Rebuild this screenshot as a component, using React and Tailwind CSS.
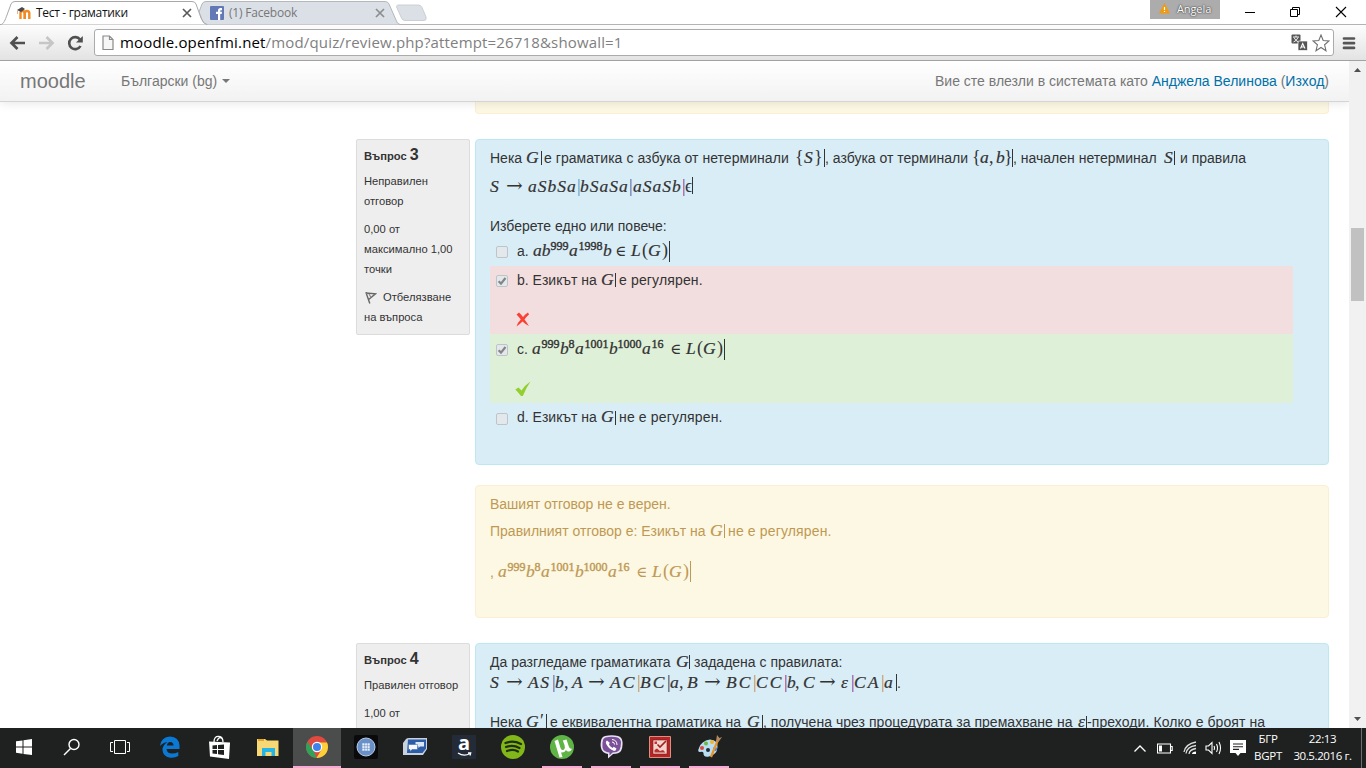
import React from 'react';

const Seg = ({ c = '', children }) => (
  <span className={`shrink-0 whitespace-pre ${c}`}>{children}</span>
);
const M = ({ c = '', children }) => (
  <span className={`shrink-0 whitespace-pre font-['Liberation_Serif',serif] text-[17.5px] italic [-webkit-text-stroke:0.2px_currentColor] ${c}`}>{children}</span>
);
const R = ({ c = '', children }) => (
  <span className={`shrink-0 whitespace-pre font-['Liberation_Serif','DejaVu_Serif',serif] text-[18px] ${c}`}>{children}</span>
);
const Arrow = () => (
  <span className="w-[22px] shrink-0 font-['DejaVu_Serif',serif] text-[20px]">→</span>
);
const Sup = ({ c = '', children }) => (
  <span className={`shrink-0 whitespace-pre ${c}`}>
    <span className="pl-[0.5px] align-[6px] font-['Liberation_Serif',serif] text-[12px] leading-none [-webkit-text-stroke:0.4px_currentColor]">{children}</span>
  </span>
);
const Bar = ({ c = '' }) => <span className={`w-px shrink-0 self-center bg-current ${c}`} />;
const Line = ({ c = '', children }) => <div className={`flex items-baseline whitespace-pre ${c}`}>{children}</div>;

const Member = () => (
  <>
    <span className="w-[16px] shrink-0 font-['DejaVu_Serif',serif] text-[15px]">∈</span>
    <M c="w-[11px]">L</M>
    <R c="w-[6px]">(</R>
    <M c="w-[14px]">G</M>
    <R c="w-[7px]">)</R>
    <Bar c="h-[21px]" />
  </>
);
const LongWord = () => (
  <>
    <M c="w-[9px]">a</M>
    <Sup c="w-[19px]">999</Sup>
    <M c="w-[8px]">b</M>
    <Sup c="w-[7px]">8</Sup>
    <M c="w-[9px]">a</M>
    <Sup c="w-[25px]">1001</Sup>
    <M c="w-[8px]">b</M>
    <Sup c="w-[25px]">1000</Sup>
    <M c="w-[9px]">a</M>
    <Sup c="w-[19px]">16</Sup>
    <Member />
  </>
);

const Check = ({ on, c = '' }) => (
  <span className={`flex size-[12px] shrink-0 items-center justify-center self-center rounded-[2px] border border-[#bfc4c8] bg-[#e3e8ec] ${c}`}>
    {on && (
      <svg width="10" height="10" viewBox="0 0 10 10"><path d="M1.6 5.2 4 7.6 8.5 2" fill="none" stroke="#858585" strokeWidth="2.2" /></svg>
    )}
  </span>
);

const Flag = () => (
  <svg width="13" height="13" viewBox="0 0 13 13" className="shrink-0">
    <path d="M2 1.500 5.800 12.500M1.500 2 11.500 2.800 5 8.200" fill="none" stroke="#666" strokeWidth="1.400" />
    <path d="M5 3 7 6.500" stroke="#888" strokeWidth="1.200" />
  </svg>
);

function Tab({ active, title, icon }) {
  return (
    <div className={`relative flex h-[25px] shrink-0 items-center ${active ? 'z-10 w-[202px] pl-[16px]' : 'w-[194px] pl-[8px]'}`}>
      <svg className={`absolute top-0 ${active ? 'left-0' : 'left-[-3px]'}`} width="208" height="25" viewBox="0 0 208 25">
        {active ? (
          <path d="M0 25C4 24 5 20 7 15L11 4Q12 1.500 15 1.500H192Q195 1.500 196 4L201 18Q203 24 207 24.500V25Z" fill="#fff" stroke="#a9a9a9" strokeWidth="1" />
        ) : (
          <path d="M6 24.500Q3 21 0 12L3 4Q4 1.500 7 1.500H186Q189 1.500 190 4L197 20Q198 24 201 24.500" fill="#dbe0e7" stroke="#b4b7bb" />
        )}
      </svg>
      <div className="relative flex items-center">
        {icon}
        <span className={`w-[151px] pl-[5px] font-['Open_Sans',sans-serif] text-[12px] leading-none ${active ? 'tracking-[-0.3px] text-[#111]' : 'tracking-[-0.2px] text-[#777]'}`}>{title}</span>
        <svg width="10" height="10" viewBox="0 0 10 10"><path d="M1 1 9 9M9 1 1 9" stroke={active ? '#5a5a5a' : '#8b8d90'} strokeWidth="1.700" /></svg>
      </div>
    </div>
  );
}

const MoodleIcon = () => (
  <svg width="15" height="14" viewBox="0 0 15 14">
    <path d="M4.500 13V7Q4.500 5 6.500 5T8.500 7V13M8.800 13V7Q9 5 11 5T13.300 7V13" fill="none" stroke="#f18a22" strokeWidth="2.400" />
    <path d="M1 4 6 1 9 3 5 6Z" fill="#4a4a4a" /><path d="M1.500 4.500V8" stroke="#d8a27a" strokeWidth=".8" />
  </svg>
);
const FbIcon = () => (
  <svg width="14" height="14" viewBox="0 0 14 14"><rect width="14" height="14" rx="1" fill="#6379b5" /><path d="M8 14V8H6V5.800H8V4.500Q8 2 10.500 2H12V4.200H10.800Q10.200 4.200 10.200 5V5.800H12L11.700 8H10.200V14Z" fill="#fff" /></svg>
);

function Browser() {
  return (
    <header className="shrink-0">
      <div className="flex h-[25px] bg-white shadow-[inset_0_-1px_0_#b3b3b3]">
        <Tab active title="Тест - граматики" icon={<MoodleIcon />} />
        <Tab title="(1) Facebook" icon={<FbIcon />} />
        <svg className="mt-[4px]" width="32" height="18" viewBox="0 0 32 18"><path d="M3 1H22Q25 1 26 3.500L30 13Q31 16.500 28 16.500H9Q6.500 16.500 5.500 14L1 4Q-.5 1 3 1Z" fill="#dbe0e7" stroke="#cbced2" /></svg>
        <div className="ml-auto flex h-[24px] items-center">
          <div className="flex h-[19px] w-[70px] items-center self-start bg-[#acacac] pb-[3px] pl-[9px]">
            <svg width="11" height="11" viewBox="0 0 11 11"><path d="M5.500 0 11 10.500H0Z" fill="#f09a10" /><path d="M5.500 4V7M5.500 8v1" stroke="#fff" strokeWidth="1.200" /></svg>
            <span className="pl-[7px] font-['Open_Sans',sans-serif] text-[11px] leading-none tracking-[-0.1px] text-white [text-shadow:0_0_2px_#333,0_0_1px_#444]">Angela</span>
          </div>
          <svg className="ml-[24px]" width="12" height="12" viewBox="0 0 12 12"><path d="M1 6.500H11" stroke="#000" /></svg>
          <svg className="ml-[33px]" width="12" height="12" viewBox="0 0 12 12"><path d="M1.500 3.500H8.500V10.500H1.500ZM3.500 3V1.500H10.500V8.500H9" fill="none" stroke="#000" /></svg>
          <svg className="mr-[19px] ml-[34px]" width="12" height="12" viewBox="0 0 12 12"><path d="M1 1 11 11M11 1 1 11" stroke="#000" strokeWidth="1.100" /></svg>
        </div>
      </div>
      <div className="flex h-[36px] items-center border-b border-[#a2a2a2] bg-linear-to-b from-[#fdfdfd] to-[#e3e3e3]">
        <svg className="ml-[9px]" width="17" height="16" viewBox="0 0 17 16"><path d="M16 8H3M8.500 2 2.500 8 8.500 14" fill="none" stroke="#505050" strokeWidth="2.700" /></svg>
        <svg className="ml-[12px]" width="17" height="16" viewBox="0 0 17 16"><path d="M1 8H14M8.500 2 14.500 8 8.500 14" fill="none" stroke="#c6c6c6" strokeWidth="2.700" /></svg>
        <svg className="ml-[12px]" width="17" height="16" viewBox="0 0 17 16"><path d="M13 4.500A6 6 0 1 0 13.500 11" fill="none" stroke="#505050" strokeWidth="2.600" /><path d="M15.800 1V7.500H9Z" fill="#505050" /></svg>
        <div className="ml-[10px] flex h-[27px] w-[1240px] items-center rounded-[3px] border border-[#ababab] bg-white">
          <svg className="ml-[7px]" width="12" height="16" viewBox="0 0 12 16"><path d="M1 1H7.500L11 4.500V14.500H1ZM7.500 1V4.500H11" fill="#f7f7f7" stroke="#8a8a8a" strokeWidth="1.200" /></svg>
          <span className="ml-[6px] font-['Open_Sans',sans-serif] text-[15px] leading-none tracking-[0.16px] text-[#808080]"><span className="text-black">moodle.openfmi.net</span>/mod/quiz/review.php?attempt=26718&amp;showall=1</span>
          <svg className="ml-auto" width="17" height="17" viewBox="0 0 17 17">
            <rect x=".5" y=".5" width="9" height="9" rx="1" fill="#555" /><rect x="7" y="7" width="9.500" height="9.500" rx="1" fill="#555" stroke="#fff" strokeWidth=".7" />
            <path d="M2 3H8M5 1.500V3M3 3.500Q4.500 7 7.500 8M7 3.500Q5.500 7 2.500 8" fill="none" stroke="#fff" strokeWidth=".9" /><path d="M9.500 14.500 11.700 9.500 14 14.500M10.300 13H13.200" fill="none" stroke="#fff" strokeWidth="1.100" />
          </svg>
          <svg className="mr-[3px] ml-[4px]" width="18" height="18" viewBox="0 0 18 18"><path d="M9 1 11.200 6.500 17 7 12.600 10.800 14 16.700 9 13.500 4 16.700 5.400 10.800 1 7 6.800 6.500Z" fill="#fff" stroke="#707070" strokeWidth="1.100" /></svg>
        </div>
        <svg className="ml-[8px]" width="14" height="14" viewBox="0 0 14 14"><path d="M2 2.500H12M2 7.200H12M2 11.900H12" stroke="#565656" strokeWidth="2.700" strokeLinecap="round" /></svg>
      </div>
    </header>
  );
}

function Question3() {
  return (
    <div className="w-[854px] shrink-0">
      <section className="h-[326px] rounded-[4px] border border-[#bce8f1] bg-[#d9edf7] pt-[5px] pl-[14px]">
        <Line c="h-[26px] leading-[24px]">
          <Seg c="w-[36px]">Нека</Seg><M c="w-[15px]">G</M><Bar c="h-[14px]" />
          <Seg c="w-[253px] pl-[2px] tracking-[0.05px]">е граматика с азбука от нетерминали</Seg>
          <R c="w-[9px]">{'{'}</R><M c="w-[10px]">S</M><R c="w-[10px]">{'}'}</R><Bar c="h-[18px]" />
          <Seg c="w-[147px]">, азбука от терминали</Seg>
          <R c="w-[8px]">{'{'}</R><M c="w-[9px]">a</M><R c="w-[7px]">,</R><M c="w-[8px]">b</M><R c="w-[8px]">{'}'}</R><Bar c="h-[18px]" />
          <Seg c="w-[151px]">, начален нетерминал</Seg>
          <M c="w-[10px]">S</M><Bar c="h-[14px]" />
          <Seg c="pl-[5px]">и правила</Seg>
        </Line>
        <Line c="h-[28px] leading-[28px]">
          <M c="w-[16px]">S</M><Arrow />
          <M c="w-[49px] tracking-[1px]">aSbSa</M><R c="w-[3px] text-[#4593c4]">|</R>
          <M c="w-[49px] tracking-[1px]">bSaSa</M><R c="w-[4px] text-[#4d56a0]">|</R>
          <M c="w-[49px] tracking-[1px]">aSaSb</M><R c="w-[3px] text-[#8a2f8f]">|</R>
          <R c="w-[7px] text-[16px]">ϵ</R><Bar c="h-[17px]" />
        </Line>
        <p className="mt-[17px] h-[20px] leading-[20px]">Изберете едно или повече:</p>
        <Line c="h-[30px] leading-[29px]">
          <Check c="mt-[2px] mr-[9px] ml-[6px]" /><Seg c="w-[16px]">a.</Seg>
          <M c="w-[17px]">ab</M><Sup c="w-[19px]">999</Sup><M c="w-[9px]">a</M><Sup c="w-[25px]">1998</Sup><M c="w-[12px]">b</M><Member />
        </Line>
        <div className="h-[68px] w-[803px] bg-[#f2dede]">
          <Line c="h-[28px] leading-[27px]">
            <Check on c="mt-[2px] mr-[9px] ml-[6px]" /><Seg c="w-[84px]">b. Езикът на</Seg><M c="w-[14px]">G</M><Bar c="h-[14px]" /><Seg c="pl-[3px] tracking-[0.15px]">е регулярен.</Seg>
          </Line>
          <svg className="mt-[18px] ml-[26px]" width="14" height="15" viewBox="0 0 14 15"><path d="M.5 2.500 3 .5Q5 2 7 5 9 2 12 .500L13 2.500Q10 5 8.500 7.500 10.500 10 13 14 9 12 6.500 9.500 4 12 .5 14.500 2 10 4.800 7.500 3 5 .5 2.500Z" fill="#fb4036" /></svg>
        </div>
        <div className="h-[69px] w-[803px] bg-[#dff0d8]">
          <Line c="h-[30px] leading-[29px]">
            <Check on c="mt-[2px] mr-[9px] ml-[6px]" /><Seg c="w-[15px]">c.</Seg><LongWord />
          </Line>
          <svg className="mt-[17px] ml-[25px]" width="16" height="16" viewBox="0 0 16 16"><path d="M.3 8.500 3.500 6.500 6.500 9.500Q10 4 15.500 .5 11 7 7.800 15H6Q3 11 .3 8.500Z" fill="#92cf2f" /></svg>
        </div>
        <Line c="h-[30px] leading-[27px]">
          <Check c="mt-[2px] mr-[9px] ml-[6px]" /><Seg c="w-[84px]">d. Езикът на</Seg><M c="w-[14px]">G</M><Bar c="h-[14px]" /><Seg c="pl-[3px] tracking-[0.15px]">не е регулярен.</Seg>
        </Line>
      </section>
      <section className="mt-[20px] h-[133px] rounded-[4px] border border-[#fbeed5] bg-[#fcf8e3] pt-[8px] pl-[14px] text-[#c09853]">
        <p className="leading-[20px]">Вашият отговор не е верен.</p>
        <Line c="mt-[3px] h-[28px] leading-[27px]">
          <Seg c="w-[220px]">Правилният отговор е: Езикът на</Seg><M c="w-[14px]">G</M><Bar c="h-[14px]" /><Seg c="pl-[3px] tracking-[0.15px]">не е регулярен.</Seg>
        </Line>
        <Line c="mt-[11px] h-[30px] leading-[30px]"><Seg c="w-[8px]">,</Seg><LongWord /></Line>
      </section>
    </div>
  );
}

const P = ({ c = '' }) => <R c={`w-[3px] ${c}`}>|</R>;

function Question4() {
  return (
    <section className="h-[200px] w-[854px] shrink-0 rounded-[4px] border border-[#bce8f1] bg-[#d9edf7] pt-[8px] pl-[14px]">
      <Line c="h-[20px] leading-[19px]">
        <Seg c="w-[186px]">Да разгледаме граматиката</Seg><M c="w-[13px]">G</M><Bar c="h-[14px]" /><Seg c="pl-[4px]">зададена с правилата:</Seg>
      </Line>
      <Line c="h-[20px] leading-[19px]">
        <M c="w-[16px]">S</M><Arrow /><M c="w-[24px] tracking-[1.500px]">AS</M><P c="text-[#4d56a0]" /><M c="w-[9px]">b</M><R c="w-[8px]">,</R>
        <M c="w-[16px]">A</M><Arrow /><M c="w-[27px] tracking-[2px]">AC</M><P c="text-[#c58a3c]" /><M c="w-[27px] tracking-[2px]">BC</M><P /><M c="w-[9px]">a</M><R c="w-[8px]">,</R>
        <M c="w-[17px]">B</M><Arrow /><M c="w-[27px] tracking-[2px]">BC</M><P c="text-[#c58a3c]" /><M c="w-[28px] tracking-[2px]">CC</M><P c="text-[#8a2f8f]" /><M c="w-[8px]">b</M><R c="w-[8px]">,</R>
        <M c="w-[16px]">C</M><Arrow /><M c="w-[10px]">ε</M><P c="text-[#8a2f8f]" /><M c="w-[27px] tracking-[2px]">CA</M><P c="text-[#c58a3c]" /><M c="w-[12px]">a</M><Bar c="h-[17px]" /><Seg>.</Seg>
      </Line>
      <Line c="mt-[20px] h-[20px] leading-[19px]">
        <Seg c="w-[36px]">Нека</Seg><M c="w-[14px]">G</M><R c="w-[6px]">′</R><Bar c="h-[17px]" /><Seg c="w-[200px] pl-[3px]">е еквивалентна граматика на</Seg><M c="w-[15px]">G</M><Bar c="h-[14px]" />
        <Seg c="w-[315px] tracking-[0.04px]">, получена чрез процедурата за премахване на</Seg><M c="w-[8px]">ε</M><Bar c="h-[12px]" /><Seg c="tracking-[0.08px]">-преходи. Колко е броят на</Seg>
      </Line>
    </section>
  );
}

const Info = ({ n, c = '', children }) => (
  <aside className={`mr-[5px] w-[114px] shrink-0 rounded-[2px] border border-[#dcdcdc] bg-[#eee] pt-[6px] pl-[7px] text-[11.200px] leading-[20px] ${c}`}>
    <h3 className="h-[20px] font-bold whitespace-pre">Въпрос <span className="text-[16px] leading-none">{n}</span></h3>
    {children}
  </aside>
);

const Slot = ({ run, active, narrow, children }) => (
  <div className={`flex h-[40px] shrink-0 flex-col items-center ${active ? 'ml-px w-[48px] bg-[#4b4c4c]' : narrow ? 'w-[48px]' : 'w-[49px] pl-px'}`}>
    <div className="flex h-[38px] items-center">{children}</div>
    {(run || active) && <div className={`h-[2px] bg-[#f7a8d3] ${active ? 'w-[48px]' : 'w-[40px]'}`} />}
  </div>
);

function Taskbar() {
  return (
    <footer className="flex h-[40px] shrink-0 bg-[#1e2120] text-white">
      <Slot narrow><svg width="16" height="16" viewBox="0 0 16 16" fill="#fff"><path d="M0 2.300 6.500 1.400V7.600H0ZM7.500 1.200 16 0V7.600H7.500ZM0 8.500H6.500V14.700L0 13.800ZM7.500 8.500H16V16L7.500 14.900Z" /></svg></Slot>
      <Slot narrow><svg width="18" height="18" viewBox="0 0 18 18"><circle cx="11" cy="6.500" r="5" fill="none" stroke="#fff" strokeWidth="1.400" /><path d="M7.500 10.500 1 17" stroke="#fff" strokeWidth="1.500" /></svg></Slot>
      <Slot narrow><svg width="20" height="14" viewBox="0 0 20 14"><path d="M4.500 .5H15.500V13.500H4.500ZM3 2.500H.5V11.500H3M17 2.500H19.500V11.500H17" fill="none" stroke="#fff" /></svg></Slot>
      <div className="w-px" />
      <Slot><svg width="22" height="22" viewBox="0 0 22 22"><path d="M1 10Q2 1 11 .5 20 1 20.500 9.500V13H7.500Q8 17.500 13 17.500 16.500 17.500 19.300 16V20Q16 22 11.500 21.700 4 21 3.500 14 3.500 9 8.500 6 4 6.500 1 10ZM7.800 9.500H14.500Q14.500 6 11.200 6 8.500 6 7.800 9.500Z" fill="#0b78d4" /></svg></Slot>
      <Slot><svg width="21" height="24" viewBox="0 0 21 24"><path d="M5 7Q5 1 10 1.500 14 2 14 7M8 6Q10 1 13 3.500" fill="none" stroke="#fff" strokeWidth="1.300" /><path d="M0 6.500 21 7.500 20 24 1 21.500Z" fill="#fff" /><path d="M3.500 10.500 8 10V14H3.500ZM9 10 15 9.500V14H9ZM3.500 15H8V19L3.500 18.500ZM9 15H15V20L9 19.200Z" fill="#1e2120" /></svg></Slot>
      <Slot><svg width="22" height="19" viewBox="0 0 22 19"><path d="M0 1H8L10 2.500H21.500V18H0Z" fill="#f8d775" /><path d="M1 1H7V3H1Z" fill="#e8a320" /><path d="M5 18V10H18V18H14.500V14H8.500V18Z" fill="#23b4e8" /></svg></Slot>
      <Slot active><svg width="22" height="22" viewBox="0 0 22 22"><circle cx="11" cy="11" r="11" fill="#e04a3f" /><path d="M1.500 5.500 8 16 11 22A11 11 0 0 1 1.500 5.500Z" fill="#2ea35a" /><path d="M21 6.500H11L15.500 13.500 10.500 22A11 11 0 0 0 21 6.500Z" fill="#fdd037" /><circle cx="11" cy="11" r="5.200" fill="#fff" /><circle cx="11" cy="11" r="4" fill="#3f82ee" /></svg></Slot>
      <Slot><svg width="24" height="24" viewBox="0 0 24 24"><rect width="24" height="24" rx="2" fill="#0a0a0c" /><circle cx="12" cy="12" r="9" fill="#6a90c8" stroke="#b9cde8" /><path d="M8 8H16V16H8ZM10.700 8V16M13.400 8V16M8 10.700H16M8 13.400H16" fill="#e9f1fb" stroke="#6a90c8" strokeWidth=".6" /></svg></Slot>
      <Slot><svg width="24" height="18" viewBox="0 0 24 18"><path d="M3 1Q4 0 6 0H24V11L20 17H0V5Z" fill="#c8d2dd" /><path d="M5 1.500H23V10.500L19.500 15H4Z" fill="#2d5ca8" /><path d="M12.500 4H21V8.500H17L15.500 10V8.500H12.500Z" fill="#dbe6f4" /><path d="M5.500 6.500H14.500V11.500H9L7 13.500V11.500H5.500Z" fill="#f6f9fd" stroke="#2d5ca8" strokeWidth=".5" /></svg></Slot>
      <Slot><span className="flex size-[24px] flex-col items-center rounded-[1px] bg-[#242b38]"><span className="h-[17px] font-['Open_Sans',sans-serif] text-[20px] leading-[15px] font-bold">a</span><svg width="15" height="5" viewBox="0 0 15 5"><path d="M1 1Q7 5 13 1.500M11 .8H13.700L13 3.500" fill="none" stroke="#fff" strokeWidth="1.300" /></svg></span></Slot>
      <Slot><svg width="24" height="24" viewBox="0 0 24 24"><circle cx="12" cy="12" r="12" fill="#82b71a" /><path d="M4.500 8Q12 5 20 9M5 12Q12 9.500 18.500 13M6 16Q12 13.500 17 16.500" fill="none" stroke="#20300a" strokeWidth="2.200" strokeLinecap="round" /></svg></Slot>
      <Slot run><svg width="24" height="24" viewBox="0 0 24 24"><circle cx="12" cy="12" r="12" fill="#5fb445" /><path d="M4.500 6 8 4.500 10.500 13Q11.500 16 14 14.500 15.500 13 14.500 10L12.800 5.500 16.500 4.500 19 12Q20 14.500 22 13.500 21 17 18 16.500 16.500 16 16 15 14.500 18 11 17.500L12.500 22 9.500 22.500Z" fill="#fff" /></svg></Slot>
      <Slot run><svg width="23" height="24" viewBox="0 0 23 24"><path d="M5 1Q12-.5 18 1 22 2 22.500 7 23 12 21 16 19 19 13 19L8 23.500V19Q2 18 1 13 0 8 1.500 4 2.500 1.500 5 1Z" fill="#e8e2f2" /><path d="M5.500 2.500Q12 1 17.500 2.500 20.500 3.500 21 7 21 12 19.500 15 17.500 17.500 12.500 17.500L9.500 20.500V17.500Q3.500 17 2.500 12.500 2 8 3 5 3.500 3 5.500 2.500Z" fill="#7b5199" /><path d="M7 5.500Q5 6.500 6.500 9.500 9 14 14 16 16 16 16.500 13.500L13.800 11.800 12.500 13Q9.500 11.500 8.800 9L10 8Z" fill="#fff" /><path d="M12 4.500Q17 5 17 10M12 7Q14.500 7 14.500 9.500" fill="none" stroke="#fff" /></svg></Slot>
      <Slot run><svg width="22" height="22" viewBox="0 0 22 22"><path d="M.5 .5H21.500V21.500H.5Z" fill="#b32626" stroke="#e08c80" /><path d="M4 4H18V18H4Z" fill="#f2d5cf" stroke="#8c1c1c" strokeWidth=".6" /><path d="M5.500 5.500H8V8H5.500Z" fill="#c53030" /><path d="M8.500 8.500 11 11 17 5" fill="none" stroke="#a32020" strokeWidth="1.600" /><path d="M5.500 16.500V14L8 12.500 11 15 14 14 16.500 16.500Z" fill="#b83030" /></svg></Slot>
      <Slot run><svg width="25" height="24" viewBox="0 0 25 24"><path d="M2 13Q4 6 13 4.500 21 5 20.500 12 20 20 12 21.500 6 22.500 6.500 18 6 16 3 17 0 17 2 13Z" fill="#b9def2" /><circle cx="5" cy="13" r="2" fill="#d94a3e" /><circle cx="9" cy="8.500" r="2" fill="#6cba3c" /><circle cx="15" cy="7" r="2" fill="#efb531" /><circle cx="11" cy="15" r="2" fill="#1e2a38" /><circle cx="18" cy="14" r="2" fill="#3a7fd0" /><path d="M20.500 6 14 22" stroke="#e8922c" strokeWidth="2.200" /><path d="M19 6 20 0 22.500 3 25 2 21.500 7Z" fill="#b58a5e" /></svg></Slot>

      <div className="ml-auto flex items-center">
        <svg width="14" height="9" viewBox="0 0 14 9"><path d="M1.500 7.500 7 2 12.500 7.500" fill="none" stroke="#fff" strokeWidth="1.300" /></svg>
        <svg className="ml-[10px]" width="16" height="11" viewBox="0 0 16 11"><path d="M.5 1H13.500V10H.5ZM14 3.500H15.200V7.500H14" fill="none" stroke="#fff" strokeWidth="1.100" /><path d="M2 2.500H5V8.500H2Z" fill="#fff" /></svg>
        <svg className="ml-[10px]" width="14" height="14" viewBox="0 0 14 14"><path d="M1 11Q2.500 3 13 1M3 12.500Q4 5.500 13 4.500M6 13Q6.500 8.500 13 7.500" fill="none" stroke="#ddd" strokeWidth="1.300" /><path d="M9 13Q9 10.500 13 10.500V13Z" fill="#fff" /></svg>
        <svg className="ml-[8px]" width="17" height="14" viewBox="0 0 17 14"><path d="M1 5H3.500L7 1.500V12.500L3.500 9H1ZM9 5Q10 7 9 9M11.500 3Q13.500 7 11.500 11M14 1Q17 7 14 13" fill="none" stroke="#fff" strokeWidth="1.100" /></svg>
        <svg className="ml-[8px]" width="16" height="16" viewBox="0 0 16 16"><path d="M0 0H16V13H10.500L8 16 5.500 13H0Z" fill="#fff" /><path d="M3 4H13M3 6.700H13M3 9.400H9" stroke="#1e2120" strokeWidth="1.100" /></svg>
        <div className="ml-[7px] w-[30px] pb-[2px] text-center font-['Open_Sans',sans-serif] text-[11.500px] leading-[17px] tracking-[-0.3px]"><p>БГР</p><p>BGPT</p></div>
        <div className="ml-[9px] w-[61px] pb-[3px] text-center font-['Open_Sans',sans-serif] text-[11.500px] leading-[17px] tracking-[-0.4px] whitespace-nowrap"><p>22:13</p><p>30.5.2016 г.</p></div>
        <div className="mr-[4px] ml-[8px] h-[40px] w-px bg-[#6d6f6e]" />
      </div>
    </footer>
  );
}

export default function App() {
  return (
    <div className="flex h-[768px] w-[1366px] flex-col overflow-hidden bg-white font-['Liberation_Sans',sans-serif] text-[14px] text-[#333]">
      <Browser />
      <div className="flex h-[667px] shrink-0">
        <main className="h-[667px] w-[1349px] overflow-hidden">
          <nav className="relative flex h-[41px] items-center border-b border-[#d4d4d4] bg-linear-to-b from-white to-[#f2f2f2] text-[#777] shadow-[0_1px_10px_rgba(0,0,0,0.1)]">
            <span className="w-[101px] pl-[20px] text-[20px] leading-none">moodle</span>
            <span className="pl-[20px]">Български (bg)</span>
            <svg className="ml-[5px]" width="8" height="4" viewBox="0 0 8 4"><path d="M0 0H8L4 4Z" fill="#777" /></svg>
            <span className="mr-[20px] ml-auto">Вие сте влезли в системата като <a className="text-[#0070a8]">Анджела Велинова</a> (<a className="text-[#0070a8]">Изход</a>)</span>
          </nav>
          <div className="ml-[475px] h-[12px] w-[854px] rounded-b-[4px] border border-t-0 border-[#fbeed5] bg-[#fcf8e3]" />
          <div className="mt-[25px] flex items-start pl-[356px]">
            <Info n="3" c="h-[196px]">
              <p className="mt-[5px]">Неправилен<br />отговор</p>
              <p className="mt-[8px]">0,00 от<br />максимално 1,00<br />точки</p>
              <div className="mt-[8px]"><div className="flex items-center gap-[6px]"><Flag />Отбелязване</div>на въпроса</div>
            </Info>
            <Question3 />
          </div>
          <div className="mt-[25px] flex items-start pl-[356px]">
            <Info n="4" c="h-[200px]">
              <p className="mt-[5px]">Правилен отговор</p>
              <p className="mt-[8px]">1,00 от</p>
            </Info>
            <Question4 />
          </div>
        </main>
        <div className="flex w-[17px] flex-col items-center bg-[#f1f1f1]">
          <svg className="mt-[7px]" width="7" height="4" viewBox="0 0 7 4"><path d="M0 4H7L3.500 0Z" fill="#505050" /></svg>
          <div className="mt-[156px] h-[73px] w-[13px] bg-[#c1c1c1]" />
          <svg className="mt-auto mb-[7px]" width="7" height="4" viewBox="0 0 7 4"><path d="M0 0H7L3.500 4Z" fill="#505050" /></svg>
        </div>
      </div>
      <Taskbar />
    </div>
  );
}
